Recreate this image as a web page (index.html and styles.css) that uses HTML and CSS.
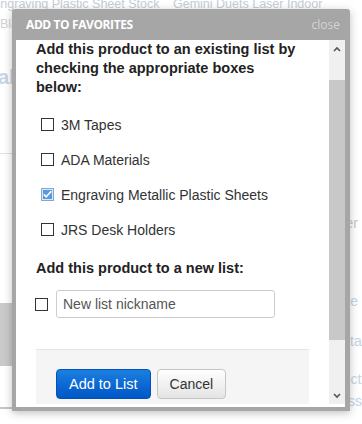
FILE: index.html
```html
<!DOCTYPE html>
<html lang="en">
<head>
    <meta charset="UTF-8">
    <meta name="viewport" content="width=device-width, initial-scale=1.0">
    <title>Add to Favorites</title>
    <link rel="stylesheet" href="styles.css">
</head>
<body>
    <div class="page">
        <!-- faded product page behind the dialog -->
        <div class="products">
            <span>Engraving Plastic Sheet Stock</span>
            <span>Gemini Duets Laser Indoor</span>
            <span class="sub">Black Plastic</span>
        </div>
        <div class="cols">
            <aside class="side">
                <h2 class="side-title">Materials</h2>
                <hr class="side-rule">
                <div class="side-box"></div>
                <div class="side-foot"></div>
            </aside>
            <div class="more">
                <p class="more-gray">Laser Engraver</p>
                <p class="more-blue more-2">Adhesive</p>
                <p class="more-blue more-3">Plastic Details</p>
                <p class="more-blue more-4">Surface Protection</p>
                <p class="more-blue more-5">Instructions for Engraving Glass</p>
            </div>
        </div>

        <div class="dialog">
            <div class="dialog-head">
                <span class="dialog-title">Add to Favorites</span>
                <span class="dialog-close">close</span>
            </div>
            <div class="dialog-body">
                <div class="dialog-content">
                    <h3 class="lead">Add this product to an existing list by checking the appropriate boxes below:</h3>

                    <ul class="lists">
                        <li class="list-row"><span class="box"></span>3M Tapes</li>
                        <li class="list-row"><span class="box"></span>ADA Materials</li>
                        <li class="list-row">
                            <svg class="box-checked" width="13" height="13" viewBox="0 0 13 13">
                                <rect x="0.5" y="0.5" width="12" height="12" fill="#d9e8f8" stroke="#1c5aa8" stroke-dasharray="1 1"/>
                                <rect x="2" y="2" width="9" height="9" fill="#5b97dc"/>
                                <path d="M2.8 6.3 L5.2 8.8 L10.3 3.2" fill="none" stroke="#fff" stroke-width="1.7"/>
                            </svg>
                            Engraving Metallic Plastic Sheets
                        </li>
                        <li class="list-row"><span class="box"></span>JRS Desk Holders</li>
                    </ul>

                    <h3 class="lead lead-new">Add this product to a new list:</h3>
                    <div class="new-row">
                        <span class="box box-new"></span>
                        <input class="nickname" type="text" placeholder="New list nickname">
                    </div>

                    <div class="actions">
                        <button class="btn btn-primary">Add to List</button>
                        <button class="btn btn-default">Cancel</button>
                    </div>
                </div>
                <div class="scrollbar">
                    <div class="scroll-btn">
                        <svg width="8" height="6" viewBox="0 0 8 6"><path d="M1 5 L4 2 L7 5" fill="none" stroke="#555" stroke-width="1.6"/></svg>
                    </div>
                    <div class="scroll-track"><div class="scroll-thumb"></div></div>
                    <div class="scroll-btn">
                        <svg width="8" height="6" viewBox="0 0 8 6"><path d="M1 1 L4 4 L7 1" fill="none" stroke="#555" stroke-width="1.6"/></svg>
                    </div>
                </div>
            </div>
        </div>
    </div>
</body>
</html>
```

FILE: styles.css
```css
html, body {
    margin: 0;
}
body {
    font-family: "Liberation Sans", Arial, sans-serif;
    background: #fff;
}
.page {
    position: relative;
    height: 424px;
    overflow: hidden;
}

/* background page */
.products {
    display: grid;
    grid-template-columns: 181px auto;
    margin: -3px 0 0 -8px;
    font-size: 12.5px;
    line-height: 14px;
    color: #c4ccd6;
    white-space: nowrap;
}
.sub {
    padding: 6px 0 0 8px;
    color: #d2d2d2;
}
.cols {
    display: grid;
    grid-template-columns: 116px 1fr;
}
.side-title {
    margin: 35px 0 0 -61px;
    font-size: 20px;
    color: #c8d5e4;
    white-space: nowrap;
}
.side-rule {
    margin: 64px 0 0;
    border: 0;
    border-top: 1px solid #e2e2e2;
}
.side-box {
    margin-top: 149px;
    height: 63px;
    background: #c9c9c9;
}
.side-foot {
    height: 41px;
    border-bottom: 2px solid #c6c6c6;
}
.more {
    margin-right: -40px;
    text-align: right;
    font-size: 14px;
    line-height: 20px;
    white-space: nowrap;
}
.more p {
    margin: 0;
}
.more-gray {
    color: #c8c8c8;
    padding-right: 44px;
    margin-top: 182px !important;
}
.more-blue {
    color: #c6d4e4;
}
.more-2 {
    padding-right: 44px;
    margin-top: 58px !important;
}
.more-3 {
    padding-right: 27px;
    margin-top: 20px !important;
}
.more-4 {
    padding-right: 22px;
    margin-top: 18px !important;
}
.more-5 {
    padding-right: 40px;
    margin-top: 2px !important;
}

/* dialog */
.dialog {
    position: absolute;
    left: 12px;
    top: 9px;
    width: 338px;
    box-sizing: border-box;
    padding: 0 5px 4px 4px;
    background: #a6a6a6;
    border-radius: 3px 3px 0 0;
    box-shadow: 0 2px 8px rgba(0, 0, 0, 0.25);
}
.dialog-head {
    height: 31px;
    display: flex;
    align-items: center;
    justify-content: space-between;
    padding: 0 5px 0 10px;
}
.dialog-title {
    font-family: "Open Sans", sans-serif;
    font-size: 12px;
    font-weight: bold;
    letter-spacing: -0.4px;
    text-transform: uppercase;
    color: #fff;
}
.dialog-close {
    font-family: "Open Sans", sans-serif;
    font-size: 12px;
    color: #d4d4d4;
}
.dialog-body {
    display: flex;
    height: 367px;
    box-sizing: border-box;
    padding-bottom: 3px;
    background: #fff;
}
.dialog-content {
    flex: 1;
    overflow: hidden;
    padding: 0 20px;
}
.lead {
    margin: 0;
    max-width: 262px;
    font-size: 14.5px;
    line-height: 19px;
    font-weight: bold;
    color: #222;
}
.lists {
    list-style: none;
    margin: 10px 0 0;
    padding: 0;
}
.list-row {
    display: flex;
    align-items: center;
    gap: 7px;
    height: 35px;
    padding-left: 5px;
    font-size: 14px;
    color: #333;
}
.box {
    display: inline-block;
    width: 13px;
    height: 13px;
    box-sizing: border-box;
    border: 1px solid #333;
    background: #fff;
}
.box-checked {
    display: block;
}
.lead-new {
    margin-top: 12px;
}
.new-row {
    display: flex;
    align-items: center;
    gap: 8px;
    margin-top: 12px;
}
.box-new {
    margin-left: -1px;
}
.nickname {
    width: 219px;
    height: 28px;
    box-sizing: border-box;
    padding: 0 6px;
    border: 1px solid #ccc;
    border-radius: 3px;
    font-family: inherit;
    font-size: 14px;
    color: #333;
}
.nickname::placeholder {
    color: #555;
}
.actions {
    display: flex;
    gap: 6px;
    margin-top: 31px;
    padding: 19px 20px 20px;
    background: #f5f5f5;
    border-top: 1px solid #e6e6e6;
}
.btn {
    height: 30px;
    border-radius: 4px;
    font-family: inherit;
    font-size: 14px;
    cursor: pointer;
}
.btn-primary {
    padding: 0 12px;
    font-size: 14.5px;
    color: #fff;
    background: linear-gradient(#1b7fe0, #0056c6);
    border: 1px solid #0152b8;
}
.btn-default {
    padding: 0 12px;
    color: #333;
    background: linear-gradient(#fff, #e4e4e4);
    border: 1px solid #c5c5c5;
}

/* scrollbar */
.scrollbar {
    width: 16px;
    display: flex;
    flex-direction: column;
    background: #f0f0f0;
}
.scroll-btn {
    height: 17px;
    display: flex;
    align-items: center;
    justify-content: center;
}
.scroll-track {
    flex: 1;
    padding-top: 23px;
}
.scroll-thumb {
    height: 260px;
    background: #c8c8c8;
}
```
